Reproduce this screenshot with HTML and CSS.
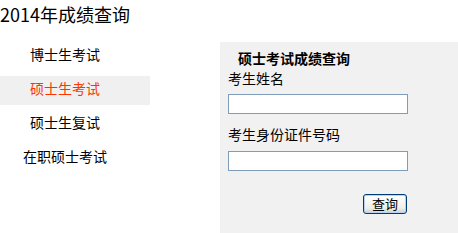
FILE: index.html
```html
<!DOCTYPE html>
<html lang="zh-CN">
<head>
  <meta charset="UTF-8">
  <title>2014年成绩查询</title>
  <link rel="stylesheet" href="styles.css">
</head>
<body>

  <h1 class="title">2014年成绩查询</h1>

  <div class="layout">
    <ul class="menu">
      <li><a href="#">博士生考试</a></li>
      <li class="active"><a href="#">硕士生考试</a></li>
      <li><a href="#">硕士生复试</a></li>
      <li><a href="#">在职硕士考试</a></li>
    </ul>

    <form class="query">
      <h2>硕士考试成绩查询</h2>
      <label for="name">考生姓名</label>
      <input type="text" id="name" class="field">
      <label for="idno" class="second">考生身份证件号码</label>
      <input type="text" id="idno" class="field second">
      <button type="button" class="btn">查询</button>
    </form>
  </div>

</body>
</html>
```

FILE: styles.css
```css
body {
  margin: 0;
  font-family: "Noto Sans CJK SC", "Liberation Sans", sans-serif;
  color: #000;
  background-color: #fff;
  overflow: hidden;
}

.title {
  margin: 0;
  padding-top: 1px;
  font-size: 18px;
  font-weight: normal;
  line-height: 26px;
}

.layout {
  display: flex;
  margin-top: 15px;
}

.menu {
  list-style: none;
  margin: 0;
  padding: 0;
  width: 150px;
  flex-shrink: 0;
}

.menu li {
  height: 29px;
  margin-bottom: 5px;
  padding-right: 20px;
  text-align: center;
  font-size: 14px;
  line-height: 24px;
}

.menu a {
  color: #000;
  text-decoration: none;
}

.menu li.active {
  background-color: #f0f0f0;
}

.menu li.active a {
  color: #ff3300;
}

.query {
  display: flex;
  flex-direction: column;
  align-items: flex-start;
  margin-left: 70px;
  flex: 1;
  height: 185px;
  padding: 6px 0 0 8px;
  background-color: #f1f1f1;
  font-size: 14px;
}

.query h2 {
  margin: 0 0 0 10px;
  font-size: 14px;
  font-weight: bold;
  line-height: 20px;
}

.query label {
  line-height: 20px;
}

.query label.second {
  margin-top: 10px;
}

.field {
  box-sizing: border-box;
  width: 180px;
  height: 20px;
  margin: 6px 0 0;
  border: 1px solid #7f9db9;
  background-color: #fff;
  padding: 0 2px;
}

.field.second {
  margin-top: 7px;
}

.btn {
  box-sizing: border-box;
  width: 44px;
  height: 20px;
  margin: 23px 0 0 135px;
  padding: 0;
  border: 1px solid #003c74;
  border-radius: 3px;
  background: linear-gradient(#ffffff, #f0f0ea 70%, #d6d0c5);
  box-shadow: inset 0 0 0 1px #b9d1f3;
  font-family: "Noto Sans CJK SC", sans-serif;
  font-size: 13px;
  line-height: 16px;
  color: #000;
}
```
